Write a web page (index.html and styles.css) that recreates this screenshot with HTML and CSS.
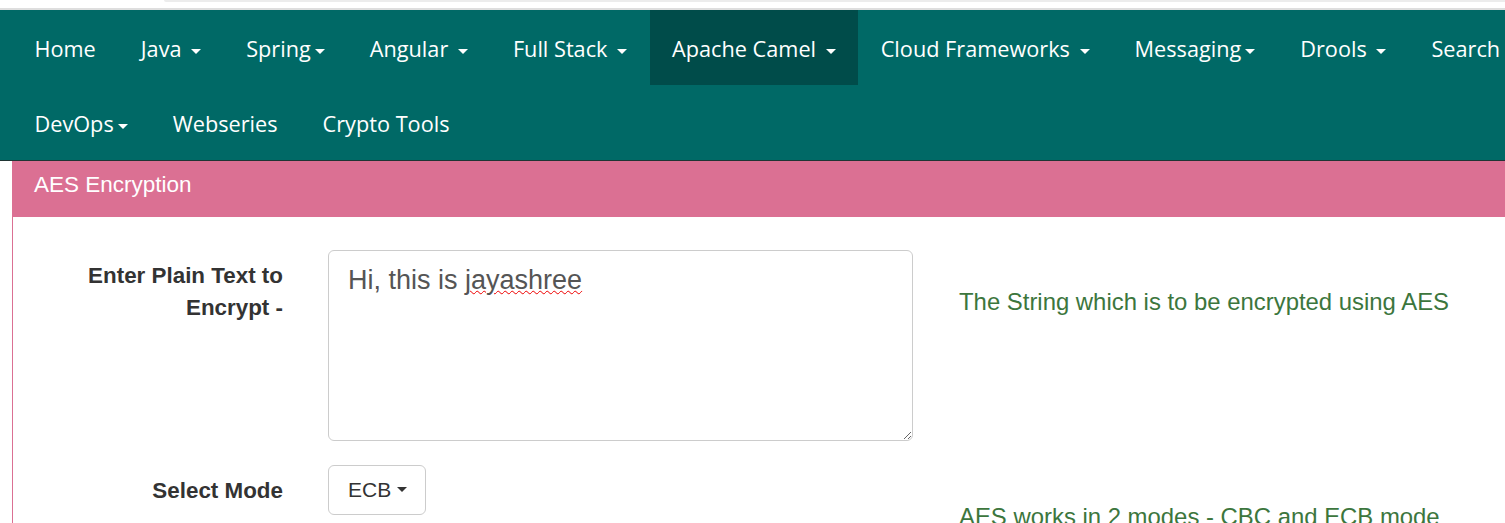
FILE: index.html
```html
<!DOCTYPE html>
<html lang="en">
<head>
<meta charset="utf-8">
<title>AES Encryption</title>
<link rel="stylesheet" href="styles.css">
</head>
<body>
<div class="topstrip"><div class="topstrip-tab"></div></div>
<nav class="navbar">
  <ul class="nav-row">
    <li><a href="#">Home</a></li>
    <li><a href="#">Java <span class="caret"></span></a></li>
    <li><a href="#">Spring<span class="caret"></span></a></li>
    <li><a href="#">Angular <span class="caret"></span></a></li>
    <li><a href="#">Full Stack <span class="caret"></span></a></li>
    <li class="active"><a href="#">Apache Camel <span class="caret"></span></a></li>
    <li><a href="#">Cloud Frameworks <span class="caret"></span></a></li>
    <li><a href="#">Messaging<span class="caret"></span></a></li>
    <li><a href="#">Drools <span class="caret"></span></a></li>
    <li><a href="#">Search</a></li>
  </ul>
  <ul class="nav-row">
    <li><a href="#">DevOps<span class="caret"></span></a></li>
    <li><a href="#">Webseries</a></li>
    <li><a href="#">Crypto Tools</a></li>
  </ul>
</nav>
<section class="panel">
  <div class="panel-heading">AES Encryption</div>
  <div class="panel-body">
    <div class="form-row">
      <label class="form-label">Enter Plain Text to Encrypt -</label>
      <div class="textarea" spellcheck="false">Hi, this is <span class="misspelled">jayashree</span></div>
      <div class="help">The String which is to be encrypted using AES</div>
    </div>
    <div class="form-row">
      <label class="form-label">Select Mode</label>
      <div><button class="dropdown-btn" type="button">ECB<span class="caret dark"></span></button></div>
      <div class="help">AES works in 2 modes - CBC and ECB mode</div>
    </div>
  </div>
</section>
</body>
</html>
```

FILE: styles.css
```css
html, body {
  margin: 0;
  padding: 0;
  background: #fff;
  overflow: hidden;
}
body {
  font-family: "Liberation Sans", Arial, sans-serif;
  color: #333;
}
.topstrip {
  height: 8px;
  border-bottom: 2px solid #dedede;
  background: #fff;
  display: flex;
}
.topstrip-tab {
  margin-left: 164px;
  height: 2px;
  flex: 1;
  background: #ececec;
  border-bottom-left-radius: 6px;
}
.navbar {
  background: #006966;
  border-bottom: 1px solid #1f3534;
  padding-left: 12px;
}
.nav-row {
  list-style: none;
  margin: 0;
  padding: 0;
  display: flex;
  white-space: nowrap;
}
.nav-row li a {
  display: block;
  height: 75px;
  line-height: 77px;
  padding: 0 22.5px;
  color: #fff;
  text-decoration: none;
  font-family: "Open Sans", "Noto Sans", sans-serif;
  font-size: 21.7px;
}
.nav-row li.active a {
  background: #004c4a;
}
.caret {
  display: inline-block;
  width: 0;
  height: 0;
  margin-left: 4px;
  vertical-align: middle;
  border-top: 5px solid #fff;
  border-left: 5px solid transparent;
  border-right: 5px solid transparent;
}
.caret.dark {
  border-top-color: #333;
  margin-left: 6px;
  margin-top: -2px;
}
.panel {
  margin-left: 12px;
  border-left: 1px solid #db7093;
}
.panel-heading {
  background: #db7093;
  color: #fff;
  height: 56px;
  line-height: 48px;
  padding-left: 22px;
  font-size: 22.5px;
  margin-left: -1px;
}
.panel-body {
  padding-top: 33px;
}
.form-row {
  display: grid;
  grid-template-columns: 270px 585px 1fr;
  column-gap: 45px;
  margin-bottom: 24px;
}
.form-label {
  text-align: right;
  font-weight: bold;
  font-size: 22.4px;
  line-height: 32px;
  padding-top: 10px;
}
.textarea {
  box-sizing: border-box;
  height: 191px;
  border: 1px solid #ccc;
  border-radius: 6px;
  padding: 10px 19px;
  font-size: 27px;
  line-height: 38px;
  color: #555;
  resize: both;
  overflow: auto;
}
.misspelled {
  text-decoration: underline wavy #e00;
  text-decoration-thickness: 1px;
  text-underline-offset: 1px;
}
.help {
  padding-left: 1px;
  padding-top: 35px;
  font-size: 23.9px;
  line-height: 34px;
  color: #3c763d;
  white-space: nowrap;
}
.dropdown-btn {
  box-sizing: border-box;
  height: 50px;
  display: inline-flex;
  align-items: center;
  white-space: nowrap;
  border: 1px solid #ccc;
  border-radius: 6px;
  background: #fff;
  padding: 0 18px 0 19px;
  font-family: "Liberation Sans", Arial, sans-serif;
  font-size: 21px;
  color: #333;
}
```
